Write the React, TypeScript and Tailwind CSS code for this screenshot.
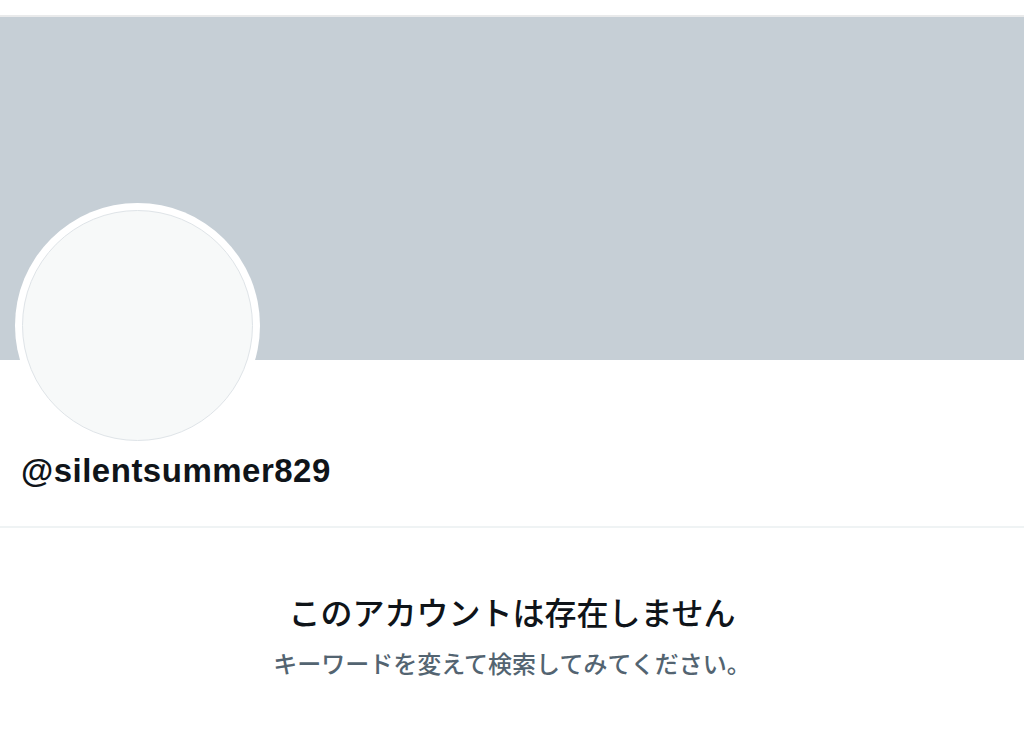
export default function App() {
  return (
    <div className="w-[1024px] h-[732px] overflow-hidden bg-white font-['Liberation_Sans',sans-serif]">
      <div className="h-[15px] bg-white" />
      <div className="h-[2px] bg-[#e9eaeb]" />
      {/* banner */}
      <div className="h-[343px] bg-[#c6cfd6]" />

      <div className="px-[15px]">
        <div className="-mt-[157px] w-[245px] h-[245px] rounded-full bg-white p-[7px]">
          <div className="w-full h-full rounded-full border border-[#dfe4e8] bg-[#f7f9f9]" />
        </div>
      </div>

      <div className="px-[21px] pt-[3px] h-[78px]">
        <div className="text-[33px] leading-[40px] font-bold text-[#0f1419] tracking-[0.5px]">
          @silentsummer829
        </div>
      </div>

      <div className="h-[2px] bg-[#eff3f4]" />

      <div className="flex flex-col items-center pt-[63px] font-['Noto_Sans_CJK_JP',sans-serif]">
        <div className="text-[32px] leading-[40px] font-medium text-[#0f1419]">
          このアカウントは存在しません
        </div>
        <div className="mt-[17px] text-[24px] leading-[30px] font-medium text-[#536471]">
          キーワードを変えて検索してみてください。
        </div>
      </div>
    </div>
  );
}
